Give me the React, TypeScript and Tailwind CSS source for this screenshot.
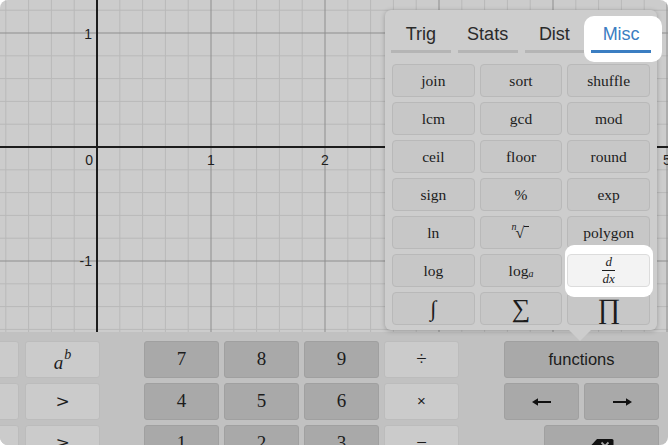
import React from "react";

const W = 668;
const H = 332;
const OX = 97;
const OY = 147;
const U = 114;
const M = U / 5;

function Graph() {
  const minorV: number[] = [];
  const majorV: number[] = [];
  for (let k = -5; k <= 26; k++) {
    const x = OX + k * M;
    if (k === 0) continue;
    if (k % 5 === 0) majorV.push(x);
    else minorV.push(x);
  }
  const minorH: number[] = [];
  const majorH: number[] = [];
  for (let k = -7; k <= 9; k++) {
    const y = OY + k * M;
    if (k === 0) continue;
    if (k % 5 === 0) majorH.push(y);
    else minorH.push(y);
  }
  return (
    <svg width={W} height={H} className="block shrink-0">
      <rect x={0} y={0} width={W} height={H} fill="#cccccc" />
      {minorV.map((x) => (
        <line key={"mv" + x} x1={x} y1={0} x2={x} y2={H} stroke="#b9b9b9" strokeWidth={1} />
      ))}
      {minorH.map((y) => (
        <line key={"mh" + y} x1={0} y1={y} x2={W} y2={y} stroke="#b9b9b9" strokeWidth={1} />
      ))}
      {majorV.map((x) => (
        <line key={"Mv" + x} x1={x} y1={0} x2={x} y2={H} stroke="#8e8e8e" strokeWidth={1} />
      ))}
      {majorH.map((y) => (
        <line key={"Mh" + y} x1={0} y1={y} x2={W} y2={y} stroke="#8e8e8e" strokeWidth={1} />
      ))}
      <line x1={OX} y1={0} x2={OX} y2={H} stroke="#1c1c1c" strokeWidth={2} />
      <line x1={0} y1={OY} x2={W} y2={OY} stroke="#1c1c1c" strokeWidth={2} />
      <g fontFamily="'Liberation Sans', Arial, sans-serif" fontSize={14} fill="#1e1e1e">
        <text x={92} y={39} textAnchor="end">1</text>
        <text x={93} y={165} textAnchor="end">0</text>
        <text x={211} y={165} textAnchor="middle">1</text>
        <text x={325} y={165} textAnchor="middle">2</text>
        <text x={667} y={165} textAnchor="middle">5</text>
        <text x={92} y={266} textAnchor="end">-1</text>
      </g>
    </svg>
  );
}

function PopBtn({ children, className = "" }: { children?: React.ReactNode; className?: string }) {
  return (
    <div
      className={`h-[33px] rounded-[4px] border border-[#b9b9b9] bg-[#c7c7c7] flex items-center justify-center text-[15.5px] text-[#1c1c1c] font-['Liberation_Serif',serif] ${className}`}
    >
      {children}
    </div>
  );
}

function Tab({ label }: { label: string }) {
  return (
    <div className="flex flex-col items-center">
      <div className="h-[28px] leading-[28px] text-[18px] text-[#2a2a2a]">{label}</div>
      <div className="mt-[2px] h-[3px] w-full bg-[#b5b5b5]" />
    </div>
  );
}

function KeyL({ children }: { children?: React.ReactNode }) {
  return (
    <div className="h-[37px] rounded-[3px] border border-[#bcbcbc] bg-[#cbcbcb] flex items-center justify-center text-[#1c1c1c]">
      {children}
    </div>
  );
}

function KeyD({ children, className = "" }: { children?: React.ReactNode; className?: string }) {
  return (
    <div
      className={`h-[37px] rounded-[3px] border border-[#a0a0a0] bg-[#a9a9a9] flex items-center justify-center text-[#1c1c1c] ${className}`}
    >
      {children}
    </div>
  );
}

function Arrow({ dir }: { dir: "left" | "right" }) {
  return (
    <svg width={20} height={10} viewBox="0 0 20 10" style={{ transform: dir === "right" ? "scaleX(-1)" : undefined }}>
      <line x1={4} y1={5} x2={19} y2={5} stroke="#111" strokeWidth={2} />
      <path d="M0 5 L6 1.2 L6 8.8 Z" fill="#111" />
    </svg>
  );
}

export default function App() {
  return (
    <div className="w-[668px] h-[445px] bg-white font-['Liberation_Sans',Arial,sans-serif]">
      <div className="relative w-full h-full rounded-[8px] overflow-hidden flex flex-col">
        <Graph />

        <div className="flex-1 bg-[#c1c1c1] pt-[9px] flex items-start">
          <div className="ml-[-56px] grid grid-cols-[75px_75px] gap-x-[6px] gap-y-[5px]">
            <KeyL />
            <KeyL>
              <span className="font-['Liberation_Serif',serif] italic text-[19px] leading-none flex items-start">
                <span className="mt-[5px]">a</span>
                <span className="text-[14px] ml-[1px]">b</span>
              </span>
            </KeyL>
            <KeyL />
            <KeyL>
              <span className="font-['DejaVu_Serif',serif] text-[17px]">&gt;</span>
            </KeyL>
            <KeyL />
            <KeyL>
              <span className="font-['DejaVu_Serif',serif] text-[17px]">≥</span>
            </KeyL>
          </div>

          <div className="ml-[44px] grid grid-cols-[75px_75px_75px_75px] gap-x-[5px] gap-y-[5px] font-['Liberation_Serif',serif] text-[19px]">
            <KeyD>7</KeyD>
            <KeyD>8</KeyD>
            <KeyD>9</KeyD>
            <KeyL>÷</KeyL>
            <KeyD>4</KeyD>
            <KeyD>5</KeyD>
            <KeyD>6</KeyD>
            <KeyL>
              <span className="text-[15px] font-['Liberation_Sans',sans-serif]">×</span>
            </KeyL>
            <KeyD>1</KeyD>
            <KeyD>2</KeyD>
            <KeyD>3</KeyD>
            <KeyL>−</KeyL>
          </div>

          <div className="ml-[45px] w-[155px] flex flex-col gap-[5px]">
            <KeyD className="text-[16.5px]">functions</KeyD>
            <div className="grid grid-cols-2 gap-[5px]">
              <KeyD>
                <Arrow dir="left" />
              </KeyD>
              <KeyD>
                <Arrow dir="right" />
              </KeyD>
            </div>
            <KeyD className="ml-[40px]">
              <svg width={24} height={16} viewBox="0 0 24 16" className="relative top-[2px]">
                <path d="M7 1 H22 a1.5 1.5 0 0 1 1.5 1.5 V13.5 a1.5 1.5 0 0 1 -1.5 1.5 H7 L0.5 8 Z" fill="#111" />
                <path d="M11.5 4.5 L18.5 11.5 M18.5 4.5 L11.5 11.5" stroke="#a9a9a9" strokeWidth={1.8} />
              </svg>
            </KeyD>
          </div>
        </div>

        {/* functions popover */}
        <div className="absolute left-[385px] top-[10px] w-[272px] h-[320px] rounded-[6px] bg-[#cdcdcd] shadow-[0_1px_5px_rgba(0,0,0,0.25)]">
          <div className="grid grid-cols-4 gap-[7px] px-[6px] pt-[10px]">
            <Tab label="Trig" />
            <Tab label="Stats" />
            <Tab label="Dist" />
            <div className="relative flex flex-col items-center">
              <div className="absolute left-[-7px] right-[-11px] top-[-4px] bottom-[-9px] rounded-[10px] bg-white" />
              <div className="relative h-[28px] leading-[28px] text-[18px] text-[#3b7ec2]">Misc</div>
              <div className="relative mt-[2px] h-[3px] w-full bg-[#3b7ec2]" />
            </div>
          </div>

          <div className="grid grid-cols-3 gap-[5px] px-[7px] mt-[11px]">
            <PopBtn>join</PopBtn>
            <PopBtn>sort</PopBtn>
            <PopBtn>shuffle</PopBtn>
            <PopBtn>lcm</PopBtn>
            <PopBtn>gcd</PopBtn>
            <PopBtn>mod</PopBtn>
            <PopBtn>ceil</PopBtn>
            <PopBtn>floor</PopBtn>
            <PopBtn>round</PopBtn>
            <PopBtn>sign</PopBtn>
            <PopBtn>%</PopBtn>
            <PopBtn>exp</PopBtn>
            <PopBtn>ln</PopBtn>
            <PopBtn>
              <span className="relative inline-flex items-start">
                <span className="italic text-[10px] leading-none absolute left-[-1px] top-[-3px]">n</span>
                <span className="text-[16px] leading-none pl-[3px]">√</span>
                <span className="w-[5px] h-[1px] bg-[#1c1c1c] mt-[1px]" />
              </span>
            </PopBtn>
            <PopBtn>polygon</PopBtn>
            <PopBtn>log</PopBtn>
            <PopBtn>
              <span>
                log<sub className="italic text-[10px] relative top-[1px]">a</sub>
              </span>
            </PopBtn>
            <div className="relative z-10">
              <div className="absolute left-[-2px] right-[-3px] top-[-9px] bottom-[-10px] rounded-[9px] bg-white" />
              <div className="relative h-[33px] rounded-[4px] border border-[#dcdcdc] bg-[#f3f3f3] flex items-center justify-center text-[#1c1c1c] font-['Liberation_Serif',serif]">
                <div className="flex flex-col items-center italic text-[13px] leading-[12px]">
                  <span>d</span>
                  <span className="my-[2px] h-[1px] w-[13px] bg-[#1c1c1c]" />
                  <span>dx</span>
                </div>
              </div>
            </div>
            <PopBtn>
              <span className="italic text-[22px] leading-none">∫</span>
            </PopBtn>
            <PopBtn>
              <span className="text-[26px] leading-none">∑</span>
            </PopBtn>
            <PopBtn>
              <span className="text-[28px] leading-none">∏</span>
            </PopBtn>
          </div>

          <svg width={24} height={13} viewBox="0 0 24 13" className="absolute left-[183px] top-[319px]">
            <path d="M0 0 L24 0 L12 12 Z" fill="#cdcdcd" />
          </svg>
        </div>
      </div>
    </div>
  );
}
